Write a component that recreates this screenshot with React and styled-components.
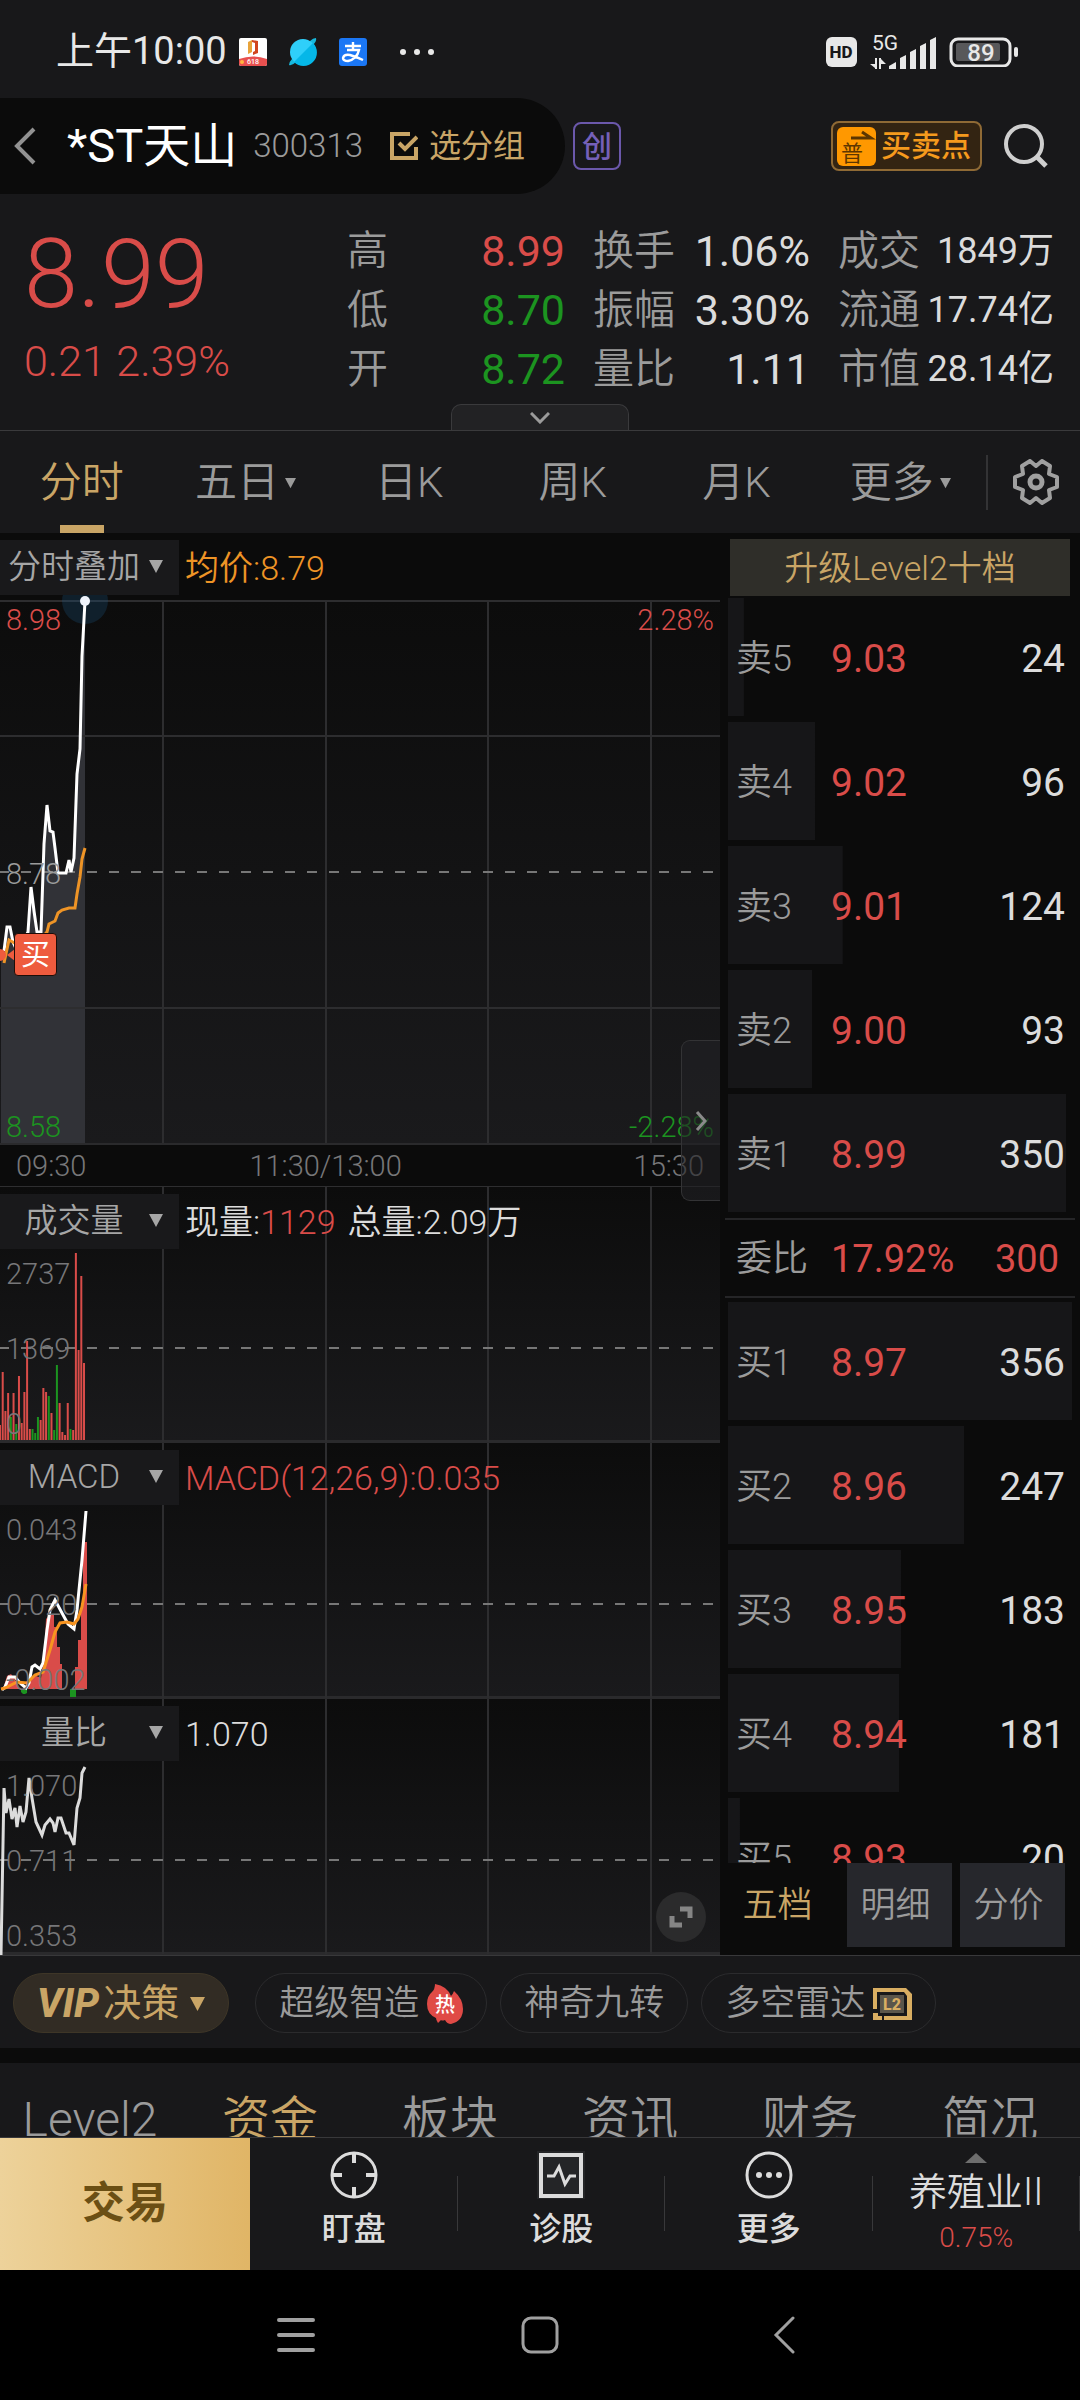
import { useState } from 'react';
import styled, { createGlobalStyle } from 'styled-components';

const red = '#d94c49';
const green = '#1c9420';
const gold = '#c9a566';
const grey = '#9b9b9b';
const light = '#dcdcdc';

const GlobalStyle = createGlobalStyle`
  * { box-sizing: border-box; }
  body {
    margin: 0;
    background: #000;
    font-family: Roboto, "Noto Sans CJK SC", sans-serif;
    font-weight: 350;
    line-height: 1.2;
    color: ${light};
  }
  button, select {
    font: inherit;
    color: inherit;
    background: none;
    border: 0;
    padding: 0;
    margin: 0;
  }
  svg { display: block; flex-shrink: 0; }
  dl, dd, dt, h1, p { margin: 0; font-weight: inherit; }
`;

const Screen = styled.div`
  display: flex;
  flex-direction: column;
  min-height: 100vh;
  background: #0b0b0b;
`;

/* status bar */

const StatusBar = styled.div`
  display: flex;
  align-items: center;
  height: 98px;
  padding: 6px 62px 0 56px;
  background: #18181a;
  color: #e8e8e8;
`;

const Clock = styled.span`
  font-size: 38px;
  font-weight: 400;
  margin-right: 12px;
`;

const StatusApps = styled.div`
  display: flex;
  align-items: center;
  gap: 22px;
`;

const StatusRight = styled.div`
  display: flex;
  align-items: center;
  gap: 12px;
  margin-left: auto;
`;

/* title bar */

const TitleBar = styled.header`
  display: flex;
  align-items: center;
  height: 96px;
  padding-right: 32px;
  background: #18181a;
`;

const TitlePill = styled.div`
  display: flex;
  align-items: center;
  height: 100%;
  padding: 0 40px 0 12px;
  background: #0b0b0b;
  border-radius: 0 48px 48px 0;
`;

const BackButton = styled.button`
  margin-right: 30px;
`;

const StockName = styled.h1`
  font-size: 47px;
  font-weight: 400;
  color: #fff;
`;

const StockCode = styled.span`
  margin-left: 16px;
  font-size: 33px;
  color: ${grey};
`;

const GroupButton = styled.button`
  display: flex;
  align-items: center;
  gap: 11px;
  margin-left: 27px;
  font-size: 32px;
  font-weight: 400;
  color: ${gold};
`;

const BoardBadge = styled.span`
  width: 48px;
  height: 48px;
  margin-left: 8px;
  border: 2px solid #6b58ab;
  border-radius: 8px;
  font-size: 30px;
  font-weight: 500;
  line-height: 46px;
  text-align: center;
  color: #7560b8;
`;

const PointsButton = styled.button`
  display: flex;
  align-items: center;
  gap: 5px;
  height: 50px;
  margin: 0 22px 0 auto;
  padding: 0 9px 0 4px;
  border: 2px solid #8f6a35;
  border-radius: 8px;
  background: #332412;
  font-size: 30px;
  font-weight: 500;
  color: #f59a1d;
`;

/* quote */

const Quote = styled.section`
  position: relative;
  display: grid;
  grid-template-columns: 1fr 733px;
  height: 237px;
  padding: 28px 26px 0 24px;
  border-bottom: 1px solid #3a3a3c;
  background: #18181a;
`;

const Price = styled.p`
  font-size: 97px;
  line-height: 104px;
  color: ${red};
`;

const Change = styled.p`
  margin-top: 8px;
  font-size: 43px;
  line-height: 54px;
  color: ${red};
`;

const Stats = styled.dl`
  display: grid;
  grid-template-columns: 218px 217px 216px;
  grid-auto-rows: 59px;
  justify-content: end;
  column-gap: 28px;
`;

const Stat = styled.div`
  display: flex;
  justify-content: space-between;
  align-items: center;
  white-space: nowrap;
`;

const StatLabel = styled.dt`
  font-size: 41px;
  color: ${grey};
`;

const StatValue = styled.dd`
  font-size: ${(p) => (p.$small ? 36 : 43)}px;
  font-weight: 400;
  color: ${(p) => p.$color || light};
`;

const QuoteHandle = styled.button`
  position: absolute;
  left: 50%;
  bottom: 0;
  display: flex;
  justify-content: center;
  align-items: center;
  width: 178px;
  height: 26px;
  margin-left: -89px;
  border: 1px solid #3a3a3c;
  border-bottom: 0;
  border-radius: 10px 10px 0 0;
  background: #222224;
`;

/* period tabs */

const PeriodTabs = styled.nav`
  display: flex;
  align-items: center;
  height: 102px;
  background: #18181a;
`;

const PeriodTab = styled.button`
  display: flex;
  flex: 1;
  justify-content: center;
  align-items: center;
  gap: 6px;
  height: 100%;
  padding-top: 3px;
  border-top: 8px solid transparent;
  border-bottom: 8px solid transparent;
  border-image: ${(p) => (p.$active
    ? `linear-gradient(to right, transparent calc(50% - 22px), ${gold} calc(50% - 22px), ${gold} calc(50% + 22px), transparent calc(50% + 22px)) 0 0 8 0`
    : 'none')};
  font-size: 42px;
  color: ${(p) => (p.$active ? gold : grey)};
`;

const SettingsButton = styled.button`
  display: flex;
  justify-content: center;
  align-items: center;
  width: 94px;
  height: 55px;
  margin-left: 4px;
  padding-left: 4px;
  border-left: 2px solid #333335;
`;

/* charts */

const Market = styled.main`
  display: grid;
  grid-template-columns: minmax(0, 2fr) minmax(0, 1fr);
`;

const Charts = styled.div`
  position: relative;
`;

const PaneHeader = styled.div`
  display: flex;
  align-items: center;
  height: ${(p) => (p.$main ? 68 : 62)}px;
  padding-top: ${(p) => (p.$main ? 0 : 6)}px;
  font-size: 33px;
`;

const Picker = styled.label`
  position: relative;
  display: flex;
  align-items: center;
  width: 179px;
  height: 55px;
  margin-right: 6px;
  background: #19191b;
  color: #a6a6a6;

  select {
    width: 100%;
    height: 55px;
    padding-right: 31px;
    appearance: none;
    text-align: center;
    text-align-last: center;
  }

  svg {
    position: absolute;
    right: 16px;
    pointer-events: none;
  }
`;

const Legend = styled.span`
  margin-right: 12px;
  padding-top: 3px;
  font-size: 34px;
  color: ${(p) => p.$color || light};
`;

const LegendValue = styled.span`
  color: ${red};
`;

const Pane = styled.div`
  display: grid;
  height: ${(p) => (p.$main ? 544 : 256)}px;
  border-bottom: ${(p) => (p.$main ? '2px solid #2a2a2c' : '3px solid #2a2a2c')};
  background: linear-gradient(#0c0c0c, #1a1a1c);

  & > * { grid-area: 1 / 1; min-width: 0; min-height: 0; }
`;

const PaneStack = styled.div`
  display: grid;
  grid-template-rows: auto 1fr;
  position: relative;
`;

const Plot = styled.svg`
  width: 100%;
  height: 100%;
  overflow: visible;
`;

const Scale = styled.div`
  display: flex;
  flex-direction: column;
  justify-content: space-between;
  align-items: ${(p) => (p.$right ? 'flex-end' : 'flex-start')};
  padding: ${(p) => (p.$main ? '3px 6px 0' : '9px 6px 0')};
  font-size: 29px;
  line-height: 32px;
  color: #777779;
`;

const ScaleValue = styled.span`
  color: ${(p) => p.$color || 'inherit'};
`;

const TimeAxis = styled.div`
  display: grid;
  grid-template-columns: 22% 46% 1fr;
  align-items: center;
  height: 42px;
  padding: 2px 16px 0;
  border-bottom: 1px solid #2e2e30;
  font-size: 29px;
  color: #777779;

  span:nth-child(2) { text-align: center; }
  span:nth-child(3) { text-align: right; }
`;

const BuyFlag = styled.span`
  position: absolute;
  top: 400px;
  left: 14px;
  width: 43px;
  height: 43px;
  border: 1px solid #1d0d08;
  border-radius: 4px;
  background: #ee5b3e;
  font-size: 29px;
  font-weight: 400;
  line-height: 43px;
  text-align: center;
  color: #fff;
`;

const CollapseButton = styled.button`
  position: absolute;
  top: 507px;
  right: 0;
  display: flex;
  justify-content: center;
  align-items: center;
  width: 39px;
  height: 161px;
  border: 1px solid #333335;
  border-right: 0;
  border-radius: 9px 0 0 9px;
  background: rgba(34, 34, 36, 0.6);
`;

const ExpandButton = styled.button`
  position: absolute;
  right: 14px;
  bottom: 13px;
  display: flex;
  justify-content: center;
  align-items: center;
  width: 50px;
  height: 50px;
  border-radius: 50%;
  background: #2b2b2c;
`;

/* order book */

const Side = styled.aside`
  display: flex;
  flex-direction: column;
`;

const UpgradeButton = styled.button`
  height: 57px;
  margin: 6px 10px 2px;
  padding-top: 2px;
  background: #2f2e29;
  font-size: 34px;
  color: ${gold};
`;

const Book = styled.div`
  flex: 1 0 auto;
  height: 0;
  overflow: hidden;
`;

const Levels = styled.table`
  display: block;

  tbody { display: block; }
`;

const Level = styled.tr`
  display: grid;
  grid-template-columns: 95px 1fr auto;
  align-items: center;
  height: 118px;
  margin: 0 8px 6px;
  padding: 5px 7px 0 8px;
  background: linear-gradient(#161618, #161618) no-repeat;
  font-size: 39px;
  font-weight: 400;

  th, td { padding: 0; text-align: left; }
  th { font-size: 36px; font-weight: 350; color: ${grey}; }
  td:nth-child(2) { color: ${red}; }
`;

const Ratio = styled.div`
  display: grid;
  grid-template-columns: 95px 1fr auto;
  align-items: center;
  height: 80px;
  margin: 1px 5px 4px;
  padding: 3px 16px 0 11px;
  border-top: 2px solid #252527;
  border-bottom: 2px solid #252527;
  font-size: 38px;
  font-weight: 400;
  color: ${red};

  span:first-child { font-size: 36px; font-weight: 350; color: ${grey}; }
`;

const BookTabs = styled.div`
  display: grid;
  grid-template-columns: 1fr 105px 105px;
  gap: 8px;
  height: 92px;
  padding: 0 15px 8px 4px;
`;

const BookTab = styled.button`
  padding: 2px 8px 0 0;
  background: ${(p) => (p.$active ? 'none' : '#26272c')};
  font-size: 35px;
  color: ${(p) => (p.$active ? gold : grey)};
`;

/* shortcuts */

const Shortcuts = styled.div`
  display: flex;
  align-items: center;
  gap: 13px;
  height: 93px;
  padding: 2px 13px 0;
  border-top: 1px solid #38383a;
  background: #18181a;
`;

const Chip = styled.button`
  display: flex;
  align-items: center;
  gap: 8px;
  height: 60px;
  padding: 2px 23px 0;
  border: 1px solid #2b2b2d;
  border-radius: 30px;
  font-size: 35px;
  color: ${grey};
  white-space: nowrap;
`;

const VipChip = styled(Chip)`
  gap: 4px;
  margin-right: 13px;
  border-color: #3e3627;
  background: #322c24;
  font-size: 38px;
  font-weight: 400;
  color: ${gold};

  i { font-size: 40px; font-weight: 800; }
  svg { margin-left: 7px; }
`;

const PageTabs = styled.nav`
  display: grid;
  grid-template-columns: repeat(6, 1fr);
  height: 74px;
  margin-top: 15px;
  overflow: hidden;
  background: #18181a;
`;

const PageTab = styled.button`
  height: 114px;
  font-size: 48px;
  line-height: 114px;
  color: ${(p) => (p.$active ? gold : grey)};
`;

/* bottom bar */

const BottomBar = styled.footer`
  display: grid;
  grid-template-columns: 250px repeat(4, 1fr);
  height: 133px;
  border-top: 1px solid #38383a;
  background: #18181a;
`;

const TradeButton = styled.button`
  background: linear-gradient(to right, #edd29a, #e0b566);
  font-size: 43px;
  font-weight: 700;
  color: #6b4f14;
`;

const Action = styled.button`
  display: flex;
  flex-direction: column;
  align-items: center;
  gap: 10px;
  padding-top: 13px;
  background: linear-gradient(#38383a, #38383a) no-repeat right 38px / 1px 55px;
  font-size: 32px;
  font-weight: 500;
  line-height: 40px;
`;

const Sector = styled(Action)`
  gap: 6px;
  padding-top: 15px;
  font-size: 38px;
  font-weight: 350;
  line-height: 46px;

  small { font-size: 28px; line-height: 34px; color: ${red}; }
`;

const SystemNav = styled.div`
  display: flex;
  justify-content: center;
  align-items: center;
  gap: 204px;
  height: 130px;
  background: #000;

  button { display: flex; justify-content: center; width: 40px; }
`;

const stats = [
  ['高', '8.99', red], ['换手', '1.06%'], ['成交', '1849万'],
  ['低', '8.70', green], ['振幅', '3.30%'], ['流通', '17.74亿'],
  ['开', '8.72', green], ['量比', '1.11'], ['市值', '28.14亿'],
];

const periods = ['分时', '五日', '日K', '周K', '月K', '更多'];
const pages = ['Level2', '资金', '板块', '资讯', '财务', '简况'];

const sells = [['卖5', '9.03', 24], ['卖4', '9.02', 96], ['卖3', '9.01', 124], ['卖2', '9.00', 93], ['卖1', '8.99', 350]];
const buys = [['买1', '8.97', 356], ['买2', '8.96', 247], ['买3', '8.95', 183], ['买4', '8.94', 181], ['买5', '8.93', 20]];

// one bar a minute, negative when the minute closed lower
const volumes = [
  15, 68, 29, 47, -23, 47, -16, 64, 17, 48, 99, 11, -11, -7, -23, 20,
  52, 48, -44, 27, -10, -75, 37, 8, 5, 37, -11, 10, 187, 90, 164, 77,
];

const priceLine = '4,350 7,326 10,326 13,341 18,352 28,331 31,286 34,310 37,331 41,331 44,243 47,204 50,230 53,231 55,247 58,272 66,272 69,259 71,271 74,257 77,173 80,148 82,55 85,0';
const averageLine = '4,362 9,339 20,345 40,339 47,331 49,323 55,320 58,312 62,309 69,307 75,307 77,293 80,276 82,258 85,247';
const ratioLine = '1,256 4,89 6,114 9,100 12,120 15,109 17,128 20,107 23,123 26,113 29,79 32,99 36,123 42,136 45,126 50,120 53,124 55,133 58,119 61,119 66,134 69,134 74,146 77,109 80,99 82,74 85,68';
const difLine = '2,247 5,244 9,234 15,234 20,240 26,245 29,240 32,224 35,222 40,226 43,220 47,187 50,167 55,157 62,170 68,181 74,186 77,167 82,117 86,68';
const deaLine = '1,246 5,245 17,239 27,240 35,232 43,229 50,207 55,189 60,180 67,179 74,181 78,176 82,164 86,141';

const Triangle = ({ size = 14, color = 'currentColor' }) => (
  <svg width={size} height={size} viewBox="0 0 14 14"><path d="M0 0h14L7 13z" fill={color} /></svg>
);

const Grid = ({ height, middle, rows = [] }) => (
  <g stroke="#2d2d2f">
    {[163, 326, 488, 651].map((x) => <line key={x} x1={x} x2={x} y1="0" y2={height} strokeWidth="2" />)}
    {rows.map((y) => <line key={y} x1="0" x2="720" y1={y} y2={y} strokeWidth="2" />)}
    <line x1="-1" x2="714" y1={middle} y2={middle} stroke="#777" strokeWidth="2" strokeDasharray="10 12" />
  </g>
);

const IndicatorPicker = ({ name, value, options }) => (
  <Picker>
    <select aria-label={name} defaultValue={value}>
      {options.map((o) => <option key={o}>{o}</option>)}
    </select>
    <Triangle />
  </Picker>
);

const Indicator = ({ name, value, legend, scale, children }) => (
  <Pane>
    <Plot viewBox="0 0 720 253" preserveAspectRatio="none">
      <Grid height={255} middle={161} />
      {children}
    </Plot>
    <PaneStack>
      <PaneHeader>
        <IndicatorPicker name={name} value={value} options={['成交量', 'MACD', '量比']} />
        {legend}
      </PaneHeader>
      <Scale>
        {scale.map((s) => <ScaleValue key={s}>{s}</ScaleValue>)}
      </Scale>
    </PaneStack>
  </Pane>
);

const Depth = ({ rows }) => (
  <Levels>
    <tbody>
      {rows.map(([label, price, count]) => (
        <Level key={label} style={{ backgroundSize: `${((count - 8) / 348) * 100}% 100%` }}>
          <th scope="row">{label}</th>
          <td>{price}</td>
          <td>{count}</td>
        </Level>
      ))}
    </tbody>
  </Levels>
);

const App = () => {
  const [period, setPeriod] = useState('分时');
  const [page, setPage] = useState('资金');
  const [bookTab, setBookTab] = useState('五档');

  return (
    <Screen>
      <GlobalStyle />
      <StatusBar>
        <Clock>上午10:00</Clock>
        <StatusApps>
          <svg width="28" height="28" viewBox="0 0 28 28">
            <rect width="28" height="28" rx="2" fill="#fff" />
            <path d="M9 4l4-2v12l-4 2z" fill="#e8a33a" />
            <path d="M13 2l6 1v12l-5 2v-3l2-1V5l-3-1z" fill="#d1451f" />
            <path d="M0 21q14-5 28 0v5a2 2 0 0 1-2 2H2a2 2 0 0 1-2-2z" fill="#e8504f" />
            <circle cx="3" cy="24" r="2" fill="#ffb53e" />
            <text x="14" y="26" fontSize="7" fontWeight="500" fill="#fff" textAnchor="middle">618</text>
          </svg>
          <svg width="28" height="28" viewBox="0 0 28 28">
            <path d="M0 27Q0 24 3 21L21 3Q24 0 27 0Q28 3 24 7L7 24Q3 28 0 27z" fill="#17b8dd" />
            <circle cx="14" cy="14" r="13" fill="#2fcffa" />
            <path d="M24 5A13 13 0 0 1 5 24z" fill="#05b7e8" />
          </svg>
          <svg width="28" height="28" viewBox="0 0 28 28">
            <rect width="28" height="28" rx="3" fill="#1b77f5" />
            <path d="M6 8h16M14 4v8M8 12h12q-2 9-11 11q-5 0-5-3q1-4 7-3q7 2 13 5" fill="none" stroke="#fff" strokeWidth="2.4" />
          </svg>
          <svg width="64" height="8" viewBox="0 0 64 8" fill="#e8e8e8">
            <circle cx="14" cy="4" r="3" />
            <circle cx="28" cy="4" r="3" />
            <circle cx="42" cy="4" r="3" />
          </svg>
        </StatusApps>
        <StatusRight>
          <svg width="31" height="30" viewBox="0 0 31 30">
            <rect width="31" height="30" rx="6" fill="#e8e8e8" />
            <text x="15" y="21" fontSize="17" fontWeight="800" fill="#18181a" textAnchor="middle">HD</text>
          </svg>
          <svg width="68" height="46" viewBox="0 -4 68 46" fill="#e8e8e8">
            <text x="3" y="17" fontSize="21" fontWeight="400">5G</text>
            <path d="M6 25h2v11H6zM1 31h5v4zM10 25h2v11h-2zM12 26l5 5h-5z" />
            <path d="M20 36v-3l7-4v7zM31 36V25l6-3v14zM41 36V19l6-3v20zM51 36V13l6-3v26zM61 36V7l6-3v32z" />
          </svg>
          <svg width="69" height="30" viewBox="0 0 69 30">
            <rect x="2" y="2" width="59" height="27" rx="7" fill="none" stroke="#e8e8e8" strokeWidth="3" />
            <rect x="7" y="6" width="44" height="18" rx="2" fill="#58585a" />
            <rect x="65" y="10" width="4" height="10" rx="2" fill="#e8e8e8" />
            <text x="32" y="24" fontSize="24" fontWeight="500" fill="#e8e8e8" textAnchor="middle">89</text>
          </svg>
        </StatusRight>
      </StatusBar>

      <TitleBar>
        <TitlePill>
          <BackButton aria-label="返回">
            <svg width="25" height="38" viewBox="0 0 25 38" fill="none" stroke="#929292" strokeWidth="4">
              <path d="M22 2L5 19l17 17" />
            </svg>
          </BackButton>
          <StockName>*ST天山</StockName>
          <StockCode>300313</StockCode>
          <GroupButton>
            <svg width="28" height="28" viewBox="0 0 28 28" fill="none" stroke="#c9a566" strokeWidth="4">
              <path d="M20 2H2v24h24V15" />
              <path d="M9 11l6 6L27 5" />
            </svg>
            选分组
          </GroupButton>
        </TitlePill>
        <BoardBadge>创</BoardBadge>
        <PointsButton>
          <svg width="39" height="39" viewBox="0 0 39 39">
            <rect width="39" height="39" rx="6" fill="#ff9800" />
            <path d="M14 11h20L25 5" fill="none" stroke="#5c3600" strokeWidth="3" />
            <text x="15" y="34" fontSize="22" fontWeight="400" fill="#5c3600" textAnchor="middle">普</text>
          </svg>
          买卖点
        </PointsButton>
        <button aria-label="搜索">
          <svg width="44" height="46" viewBox="0 0 44 46" fill="none" stroke="#cfcfcf" strokeWidth="4">
            <circle cx="20" cy="21" r="18" />
            <path d="M33 34l9 9" strokeWidth="5" />
          </svg>
        </button>
      </TitleBar>

      <Quote>
        <div>
          <Price>8.99</Price>
          <Change>0.21 2.39%</Change>
        </div>
        <Stats>
          {stats.map(([label, value, color], i) => (
            <Stat key={label}>
              <StatLabel>{label}</StatLabel>
              <StatValue $color={color} $small={i % 3 === 2}>{value}</StatValue>
            </Stat>
          ))}
        </Stats>
        <QuoteHandle aria-label="展开">
          <svg width="20" height="12" viewBox="0 0 20 12" fill="none" stroke="#9b9b9b" strokeWidth="3">
            <path d="M1 1l9 9 9-9" />
          </svg>
        </QuoteHandle>
      </Quote>

      <PeriodTabs>
        {periods.map((name) => (
          <PeriodTab key={name} $active={name === period} onClick={() => setPeriod(name)}>
            {name}
            {(name === '五日' || name === '更多') && <Triangle size={11} />}
          </PeriodTab>
        ))}
        <SettingsButton aria-label="设置">
          <svg width="46" height="46" viewBox="0 0 46 46" fill="none" stroke="#a0a0a0" strokeWidth="4" strokeLinejoin="round">
            <path d="M17 2l6 5 6-5 8 5-1 8 8 3v10l-8 3 1 8-8 5-6-5-6 5-8-5 1-8-8-3V18l8-3-1-8z" />
            <circle cx="23" cy="23" r="6" strokeWidth="5" />
          </svg>
        </SettingsButton>
      </PeriodTabs>

      <Market>
        <Charts>
          <PaneHeader $main>
            <IndicatorPicker name="叠加" value="分时叠加" options={['分时叠加']} />
            <Legend $color="#ee9426">均价:8.79</Legend>
          </PaneHeader>
          <Pane $main>
            <Plot viewBox="0 0 720 542" preserveAspectRatio="none">
              <line x1="0" x2="720" y1="0" y2="0" stroke="#2d2d2f" strokeWidth="2" />
              <polygon points={`1,542 1,354 ${priceLine} 85,542`} fill="#313237" />
              <Grid height={542} middle={271} rows={[135, 407]} />
              <circle cx="85" cy="0" r="23" fill="#1d5a8c" opacity="0.25" />
              <polyline points={priceLine} fill="none" stroke="#fff" strokeWidth="3" />
              <polyline points={averageLine} fill="none" stroke="#ee9426" strokeWidth="3" />
              <circle cx="85" cy="0" r="5" fill="#eef3fb" />
              <path d="M7 354l8-6v12z" fill="#ee5b3e" />
              <path d="M0 348a6 6 0 0 1 0 12z" fill="#ee5b3e" />
            </Plot>
            <Scale $main>
              <ScaleValue $color={red}>8.98</ScaleValue>
              <ScaleValue $color="#9b9b9b">8.78</ScaleValue>
              <ScaleValue $color={green}>8.58</ScaleValue>
            </Scale>
            <Scale $main $right>
              <ScaleValue $color={red}>2.28%</ScaleValue>
              <ScaleValue $color={green}>-2.28%</ScaleValue>
            </Scale>
          </Pane>
          <TimeAxis>
            <span>09:30</span>
            <span>11:30/13:00</span>
            <span>15:30</span>
          </TimeAxis>

          <Indicator
            name="指标一"
            value="成交量"
            scale={['2737', '1369', '0']}
            legend={(
              <>
                <Legend>现量:<LegendValue>1129</LegendValue></Legend>
                <Legend>总量:2.09万</Legend>
              </>
            )}
          >
            {volumes.map((v, i) => (
              <rect
                key={i}
                x={i * 2.71 - 1}
                y={253 - Math.abs(v)}
                width="2"
                height={Math.abs(v)}
                fill={v < 0 ? green : red}
              />
            ))}
          </Indicator>

          <Indicator
            name="指标二"
            value="MACD"
            scale={['0.043', '0.020', '-0.002']}
            legend={<Legend $color={red}>MACD(12,26,9):0.035</Legend>}
          >
            <path d="M3 246l4-13 4-2 3 4 6 11zM28 246l2-8 4-6 7 3 3-20 2-39 4-4h4v12h3v20h3v17h2v25zM75 246v-22h3v-27h3v-37h2V99h4v147z" fill={red} />
            <path d="M21 246h6v4l-2 1h-2l-2-2zM70 246h6v8h-6z" fill={green} />
            <polyline points={difLine} fill="none" stroke="#fff" strokeWidth="3" />
            <polyline points={deaLine} fill="none" stroke="#f79420" strokeWidth="3" />
          </Indicator>

          <Indicator
            name="指标三"
            value="量比"
            scale={['1.070', '0.711', '0.353']}
            legend={<Legend>1.070</Legend>}
          >
            <polyline points={ratioLine} fill="none" stroke="#dcdcdc" strokeWidth="3" />
          </Indicator>

          <BuyFlag>买</BuyFlag>
          <CollapseButton aria-label="收起">
            <svg width="12" height="20" viewBox="0 0 12 20" fill="none" stroke="#8a8a8a" strokeWidth="3">
              <path d="M2 1l8 9-8 9" />
            </svg>
          </CollapseButton>
          <ExpandButton aria-label="全屏">
            <svg width="24" height="24" viewBox="0 0 24 24" fill="none" stroke="#858585" strokeWidth="5">
              <path d="M11 4h10v9M3 11v9h10" />
            </svg>
          </ExpandButton>
        </Charts>

        <Side>
          <UpgradeButton>升级Level2十档</UpgradeButton>
          <Book>
            <Depth rows={sells} />
            <Ratio>
              <span>委比</span>
              <span>17.92%</span>
              <span>300</span>
            </Ratio>
            <Depth rows={buys} />
          </Book>
          <BookTabs>
            {['五档', '明细', '分价'].map((name) => (
              <BookTab key={name} $active={name === bookTab} onClick={() => setBookTab(name)}>{name}</BookTab>
            ))}
          </BookTabs>
        </Side>
      </Market>

      <Shortcuts>
        <VipChip>
          <i>VIP</i>
          决策
          <Triangle size={15} />
        </VipChip>
        <Chip>
          超级智造
          <svg width="36" height="40" viewBox="0 0 36 40">
            <path d="M8 0q12 2 16 12q2-2 3-5q9 8 9 18q0 12-12 15q-4 0-6-4q-3 1-4 0l-3 3q-2-3-2-5q-9-4-9-14q0-8 5-12q3-3 3-8z" fill="#e04a46" />
            <text x="18" y="28" fontSize="20" fontWeight="500" fill="#fff" textAnchor="middle">热</text>
          </svg>
        </Chip>
        <Chip>神奇九转</Chip>
        <Chip>
          多空雷达
          <svg width="39" height="32" viewBox="0 0 39 32">
            <path d="M0 0h33l6 6v26H11v-4h23V8l-3-4H4v17H0z" fill="#d9ae62" />
            <path d="M0 25h5v3h4v4H0z" fill="#d9ae62" />
            <rect x="7" y="7" width="24" height="18" fill="#5b564b" />
            <text x="19" y="22" fontSize="16" fontWeight="800" fill="#d9ae62" textAnchor="middle">L2</text>
          </svg>
        </Chip>
      </Shortcuts>

      <PageTabs>
        {pages.map((name) => (
          <PageTab key={name} $active={name === page} onClick={() => setPage(name)}>{name}</PageTab>
        ))}
      </PageTabs>

      <BottomBar>
        <TradeButton>交易</TradeButton>
        <Action>
          <svg width="48" height="48" viewBox="0 0 48 48" fill="none" stroke="#dcdcdc" strokeWidth="3">
            <circle cx="24" cy="24" r="22" />
            <path d="M24 2v10M24 36v10M2 24h10M36 24h10" strokeWidth="4" />
          </svg>
          盯盘
        </Action>
        <Action>
          <svg width="48" height="48" viewBox="0 0 48 48" fill="none" stroke="#dcdcdc">
            <rect width="48" height="48" fill="#242527" stroke="none" />
            <rect x="4" y="4" width="40" height="41" strokeWidth="4" />
            <path d="M10 25h7l5-9 6 17 5-8h6" strokeWidth="3" />
          </svg>
          诊股
        </Action>
        <Action>
          <svg width="48" height="48" viewBox="0 0 48 48" fill="#dcdcdc">
            <circle cx="24" cy="24" r="22" fill="none" stroke="#dcdcdc" strokeWidth="3" />
            <circle cx="14" cy="24" r="3" />
            <circle cx="24" cy="24" r="3" />
            <circle cx="34" cy="24" r="3" />
          </svg>
          更多
        </Action>
        <Sector>
          <svg width="22" height="10" viewBox="0 0 22 10"><path d="M0 10L11 0l11 10z" fill="#6e6e6e" /></svg>
          养殖业II
          <small>0.75%</small>
        </Sector>
      </BottomBar>

      <SystemNav>
        <button aria-label="任务">
          <svg width="38" height="36" viewBox="0 0 38 36" stroke="#a0a0a0" strokeWidth="4" strokeLinecap="round">
            <path d="M2 3h34M2 18h34M2 33h34" />
          </svg>
        </button>
        <button aria-label="主页">
          <svg width="38" height="38" viewBox="0 0 38 38" fill="none" stroke="#a0a0a0" strokeWidth="3">
            <rect x="2" y="2" width="34" height="34" rx="8" />
          </svg>
        </button>
        <button aria-label="返回上级">
          <svg width="22" height="38" viewBox="0 0 22 38" fill="none" stroke="#a0a0a0" strokeWidth="3" strokeLinecap="round">
            <path d="M20 2L3 19l17 17" />
          </svg>
        </button>
      </SystemNav>
    </Screen>
  );
};

export default App;
